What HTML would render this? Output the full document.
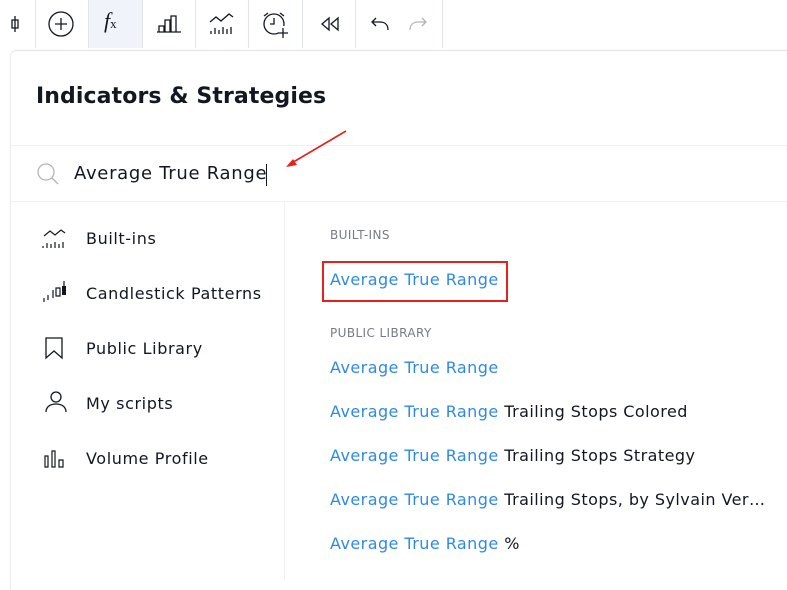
<!DOCTYPE html>
<html><head><style>
*{margin:0;padding:0;box-sizing:border-box}
body{width:787px;height:580px;overflow:hidden;background:#fff;font-family:"DejaVu Sans","Liberation Sans",sans-serif;color:#131722;position:relative}
.tb{position:absolute;top:0;left:0;width:787px;height:48px;background:#fff}
.sep{position:absolute;top:0;width:1px;height:48px;background:#e0e3eb}
.ic{position:absolute;top:10px}
.dlg{position:absolute;left:10px;top:50px;width:790px;height:540px;background:#fff;border-top-left-radius:6px;border-top:1px solid #e0e3eb;border-left:1px solid #e9ebf0}
.t{position:absolute;font-size:16px;color:#131722;white-space:nowrap;letter-spacing:0.45px}
.l{letter-spacing:0.6px}
.b{color:#2e8ae6}
.h{position:absolute;font-size:12px;color:#787b86;letter-spacing:0.4px}
</style></head><body>
<div class="tb">
<div class="sep" style="left:35px"></div><div class="sep" style="left:88px"></div><div class="sep" style="left:142px"></div><div class="sep" style="left:195px"></div><div class="sep" style="left:248px"></div><div class="sep" style="left:302px"></div><div class="sep" style="left:355px"></div><div class="sep" style="left:442px"></div>
<div style="position:absolute;left:89px;top:0;width:53px;height:48px;background:#f0f3fa"></div>
<svg class="ic" style="left:8px" width="14" height="28"><path d="M7 6v16M4 10h6v8H4z" stroke="#131722" fill="none" stroke-width="1.3"/></svg>
<svg class="ic" style="left:47px" width="28" height="28"><circle cx="14" cy="14" r="12" stroke="#131722" fill="none" stroke-width="1.3"/><path d="M14 8v12M8 14h12" stroke="#131722" stroke-width="1.3"/></svg>
<div style="position:absolute;left:104px;top:8px;font:italic 22px 'Liberation Serif',serif;color:#131722">f<span style="font-size:13px;font-style:normal">x</span></div>
<svg class="ic" style="left:155px" width="28" height="28"><path d="M2 22h24M4 22v-6h5v6M10 22V10h5v12M16 22V6h5v16" stroke="#131722" fill="none" stroke-width="1.3"/></svg>
<svg class="ic" style="left:207px" width="30" height="28"><path d="M3 12l6-5 5 4 8-7 4 3" stroke="#131722" fill="none" stroke-width="1.3"/><path d="M4 24v-3M8 24v-6M12 24v-4M16 24v-7M20 24v-5M24 24v-7" stroke="#131722" stroke-width="1.3"/></svg>
<svg class="ic" style="left:260px" width="30" height="30"><circle cx="14" cy="14" r="10" stroke="#131722" fill="none" stroke-width="1.3"/><path d="M4 6l4-3M24 6l-4-3M14 8v6h-4" stroke="#131722" fill="none" stroke-width="1.3"/><rect x="18" y="16" width="10" height="12" fill="#fff"/><path d="M23 18v10M18 23h10" stroke="#131722" stroke-width="1.3"/></svg>
<svg class="ic" style="left:318px" width="26" height="28"><path d="M11 8l-7 6 7 6zM20 8l-7 6 7 6z" stroke="#131722" fill="none" stroke-width="1.3"/></svg>
<svg class="ic" style="left:368px" width="24" height="28"><path d="M20 20c0-6-4-8-8-8H4M8 8l-4 4 4 4" stroke="#131722" fill="none" stroke-width="1.3"/></svg>
<svg class="ic" style="left:406px" width="24" height="28"><path d="M4 20c0-6 4-8 8-8h8M16 8l4 4-4 4" stroke="#b2b5be" fill="none" stroke-width="1.3"/></svg>
</div>
<div class="dlg"></div>
<div style="position:absolute;left:36px;top:84px;font-size:22px;font-weight:bold;color:#131722;letter-spacing:0.1px">Indicators &amp; Strategies</div>
<div style="position:absolute;left:10px;top:145px;width:777px;height:1px;background:#eef0f4"></div>
<svg style="position:absolute;left:36px;top:162px" width="26" height="26"><circle cx="10" cy="10" r="8" stroke="#b2b5be" fill="none" stroke-width="1.3"/><path d="M16 16l6 6" stroke="#b2b5be" stroke-width="1.3"/></svg>
<div style="position:absolute;left:74px;top:163px;font-size:18px;color:#131722;letter-spacing:0.7px">Average True Range</div>
<div style="position:absolute;left:266px;top:164px;width:1px;height:22px;background:#131722"></div>
<svg style="position:absolute;left:280px;top:128px" width="70" height="42"><path d="M66 3L10 36" stroke="#e8201a" stroke-width="1.6"/><path d="M6 39l11-2-4-6z" fill="#e8201a"/></svg>
<div style="position:absolute;left:10px;top:201px;width:777px;height:1px;background:#eef0f4"></div>
<div style="position:absolute;left:284px;top:202px;width:1px;height:378px;background:#eef0f4"></div>
<svg style="position:absolute;left:41px;top:226px" width="30" height="26"><path d="M3 10l6-5 5 4 6-5 4 3" stroke="#131722" fill="none" stroke-width="1.2"/><path d="M2 22v-2M6 22v-5M10 22v-4M14 22v-6M18 22v-4M22 22v-6" stroke="#131722" stroke-width="1.2"/></svg>
<div class="t l" style="left:86px;top:229px">Built-ins</div>
<svg style="position:absolute;left:41px;top:278px" width="30" height="26"><path d="M3 24v-4M7 22v-5M12 20v-8M15 10v8h4v-8z" stroke="#131722" fill="none" stroke-width="1.2"/><rect x="21" y="8" width="4" height="9" fill="#131722"/><path d="M23 3v5" stroke="#131722" stroke-width="1.2"/></svg>
<div class="t l" style="left:86px;top:284px">Candlestick Patterns</div>
<svg style="position:absolute;left:44px;top:336px" width="24" height="26"><path d="M2 2h16v20l-8-7-8 7z" stroke="#131722" fill="none" stroke-width="1.3"/></svg>
<div class="t l" style="left:86px;top:339px">Public Library</div>
<svg style="position:absolute;left:44px;top:390px" width="26" height="26"><circle cx="12" cy="7" r="5" stroke="#131722" fill="none" stroke-width="1.3"/><path d="M2 22c0-5 4-8 10-8s10 3 10 8" stroke="#131722" fill="none" stroke-width="1.3"/></svg>
<div class="t l" style="left:86px;top:394px">My scripts</div>
<svg style="position:absolute;left:43px;top:448px" width="26" height="22"><path d="M2 8h3v11H2zM9 3h3v16H9zM16 12h4v7h-4z" stroke="#131722" fill="none" stroke-width="1.2"/></svg>
<div class="t l" style="left:86px;top:449px">Volume Profile</div>
<div class="h" style="left:330px;top:228px">BUILT-INS</div>
<div style="position:absolute;left:322px;top:261px;width:186px;height:41px;border:2px solid #e8201a"></div>
<div class="t b" style="left:330px;top:270px">Average True Range</div>
<div class="h" style="left:330px;top:326px">PUBLIC LIBRARY</div>
<div class="t" style="left:330px;top:358px"><span class="b">Average True Range</span></div>
<div class="t" style="left:330px;top:402px"><span class="b">Average True Range</span> Trailing Stops Colored</div>
<div class="t" style="left:330px;top:446px"><span class="b">Average True Range</span> Trailing Stops Strategy</div>
<div class="t" style="left:330px;top:490px"><span class="b">Average True Range</span> Trailing Stops, by Sylvain Ver…</div>
<div class="t" style="left:330px;top:534px"><span class="b">Average True Range</span> %</div>
</body></html>
